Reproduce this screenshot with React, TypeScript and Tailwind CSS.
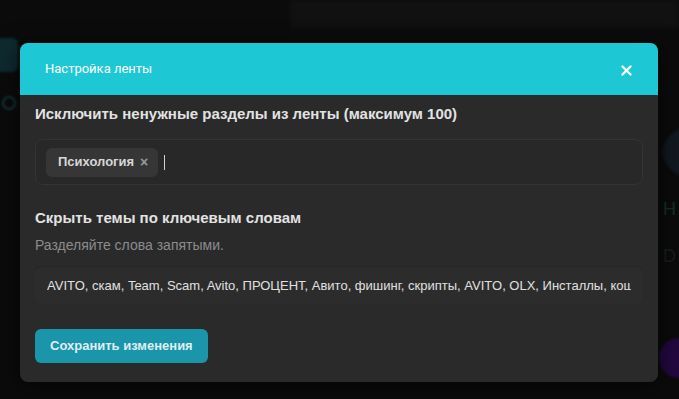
import * as React from "react"

const keywords =
  "AVITO, скам, Team, Scam, Avito, ПРОЦЕНТ, Авито, фишинг, скрипты, AVITO, OLX, Инсталлы, кошельки, дроп"

// blurred page behind the modal
function Backdrop() {
  return (
    <div className="flex h-full w-full flex-col bg-[#0b0b0b]">
      <div className="flex h-[28px] justify-end">
        <div className="w-[389px] bg-[#111111] blur-[2px]" />
      </div>
      <div className="flex flex-1 justify-between">
        <div className="flex flex-col gap-[24px] pt-[10px]">
          <div className="-ml-2 h-[34px] w-[26px] rounded-md bg-[#0e2a30] blur-[1px]" />
          <div className="ml-[2px] h-[14px] w-[14px] rounded-full border-2 border-[#10383a] blur-[1px]" />
        </div>
        <div className="flex w-[16px] flex-col items-start gap-[20px] pt-[100px] font-['Liberation_Sans',sans-serif] text-[18px]">
          <div className="h-[48px] w-[48px] shrink-0 rounded-full bg-[#121820] blur-[1px]" />
          <span className="text-[#12302a]">H</span>
          <span className="text-[#14201e]">D</span>
          <div className="mt-[48px] h-[40px] w-[40px] shrink-0 -translate-x-[4px] rounded-full bg-[#220840] blur-[1px]" />
        </div>
      </div>
    </div>
  )
}

function Tag({ label }: { label: string }) {
  return (
    <span className="flex h-[29px] items-center gap-[6px] rounded-md bg-[#363636] pl-3 pr-[10px] text-[13px] font-bold text-[#d6d6d6]">
      {label}
      <span className="text-[14px] font-bold leading-none text-[#9a9a9a]">×</span>
    </span>
  )
}

export default function App() {
  return (
    <div className="relative h-[399px] w-[679px] overflow-hidden font-['Liberation_Sans',Arial,sans-serif]">
      <Backdrop />
      <div className="absolute left-5 top-[43px] w-[638px] overflow-hidden rounded-lg bg-[#2a2a2a] shadow-[0_4px_24px_rgba(0,0,0,0.6)]">
        <div className="flex h-[52px] items-center justify-between bg-[#1dc8d4] pl-[25px] pr-[26px]">
          <h2 className="font-['Roboto',sans-serif] text-[13px] text-white">Настройка ленты</h2>
          <svg width="11" height="11" viewBox="0 0 11 11" className="mt-[3px]">
            <path d="M1.5 1.5 L9.5 9.5 M9.5 1.5 L1.5 9.5" stroke="white" strokeWidth="2.2" strokeLinecap="round" />
          </svg>
        </div>

        <div className="flex flex-col items-start px-[15px] pb-[19px] pt-[9px]">
          <h3 className="text-[15px] font-bold leading-[20px] text-[#e2e2e2]">
            Исключить ненужные разделы из ленты (максимум 100)
          </h3>
          <div className="mt-[15px] flex h-[46px] w-full items-center gap-[6px] rounded-lg border border-[#343434] bg-[#282828] px-[10px]">
            <Tag label="Психология" />
            <span className="h-[15px] w-px bg-[#d0d0d0]" />
          </div>

          <h3 className="mt-[23px] text-[15px] font-bold leading-[20px] text-[#e2e2e2]">
            Скрыть темы по ключевым словам
          </h3>
          <p className="mt-[8px] text-[14px] leading-[18px] text-[#8c8c8c]">Разделяйте слова запятыми.</p>
          <input
            readOnly
            value={keywords}
            className="mt-[12px] h-[38px] w-full rounded-md bg-[#2c2c2c] px-3 text-[13px] text-[#e0e0e0] shadow-[inset_0_1px_0_rgba(0,0,0,0.15)] outline-none"
          />

          <button className="mt-[25px] h-[34px] rounded-md bg-[#1a95a9] px-[15px] text-[13px] font-bold text-[#dfeef1]">
            Сохранить изменения
          </button>
        </div>
      </div>
    </div>
  )
}
